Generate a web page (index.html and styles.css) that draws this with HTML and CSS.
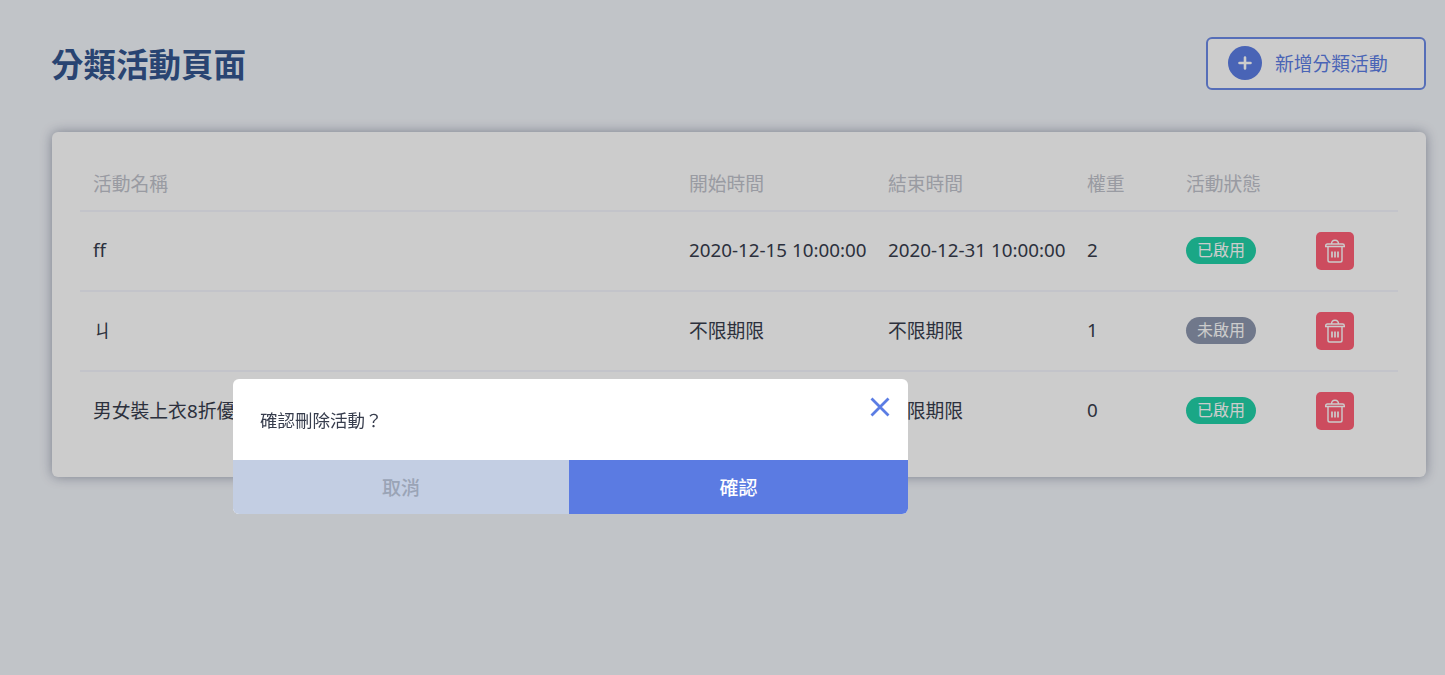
FILE: index.html
```html
<!DOCTYPE html>
<html lang="zh-Hant">
<head>
<meta charset="utf-8">
<title>分類活動頁面</title>
<link rel="stylesheet" href="styles.css">
</head>
<body>
<main class="page">
  <header class="page-head">
    <h1 class="page-title">分類活動頁面</h1>
    <button class="add-btn" type="button">
      <span class="add-icon"><svg width="14" height="14" viewBox="0 0 14 14"><path d="M7 1.500v11M1.500 7h11" stroke="#fff" stroke-width="2.600" stroke-linecap="round" fill="none"/></svg></span>
      <span>新增分類活動</span>
    </button>
  </header>
  <section class="card">
    <div class="row row-head">
      <div class="cell">活動名稱</div>
      <div class="cell">開始時間</div>
      <div class="cell">結束時間</div>
      <div class="cell">權重</div>
      <div class="cell">活動狀態</div>
      <div class="cell"></div>
    </div>
    <div class="row">
      <div class="cell">ff</div>
      <div class="cell">2020-12-15 10:00:00</div>
      <div class="cell">2020-12-31 10:00:00</div>
      <div class="cell">2</div>
      <div class="cell cell-ctl"><span class="badge badge-on">已啟用</span></div>
      <div class="cell cell-ctl"><button class="del-btn" type="button"><svg class="trash" viewBox="0 0 20 24"><path d="M.7 7.500h18.600v-.8q0-1.700-1.700-1.700H2.400q-1.700 0-1.700 1.700zM6.500 5q0-3.800 3.500-3.800T13.500 5M3 7.500v13.700q0 1.800 1.800 1.800h10.400q1.800 0 1.800-1.800V7.500"/><path class="trash-bars" d="M7 12.500v6M10 12.500v6M13 12.500v6"/></svg></button></div>
    </div>
    <div class="row">
      <div class="cell">ㄐ</div>
      <div class="cell">不限期限</div>
      <div class="cell">不限期限</div>
      <div class="cell">1</div>
      <div class="cell cell-ctl"><span class="badge badge-off">未啟用</span></div>
      <div class="cell cell-ctl"><button class="del-btn" type="button"><svg class="trash" viewBox="0 0 20 24"><path d="M.7 7.500h18.600v-.8q0-1.700-1.700-1.700H2.400q-1.700 0-1.700 1.700zM6.500 5q0-3.800 3.500-3.800T13.500 5M3 7.500v13.700q0 1.800 1.800 1.800h10.400q1.800 0 1.800-1.800V7.500"/><path class="trash-bars" d="M7 12.500v6M10 12.500v6M13 12.500v6"/></svg></button></div>
    </div>
    <div class="row row-last">
      <div class="cell">男女裝上衣8折優惠</div>
      <div class="cell">不限期限</div>
      <div class="cell">不限期限</div>
      <div class="cell">0</div>
      <div class="cell cell-ctl"><span class="badge badge-on">已啟用</span></div>
      <div class="cell cell-ctl"><button class="del-btn" type="button"><svg class="trash" viewBox="0 0 20 24"><path d="M.7 7.500h18.600v-.8q0-1.700-1.700-1.700H2.400q-1.700 0-1.700 1.700zM6.500 5q0-3.800 3.500-3.800T13.500 5M3 7.500v13.700q0 1.800 1.800 1.800h10.400q1.800 0 1.800-1.800V7.500"/><path class="trash-bars" d="M7 12.500v6M10 12.500v6M13 12.500v6"/></svg></button></div>
    </div>
  </section>
</main>
<div class="overlay"></div>
<div class="modal">
  <div class="modal-body">
    <p class="modal-text">確認刪除活動？</p>
    <button class="modal-close" type="button" aria-label="關閉"><svg width="20" height="20" viewBox="0 0 20 20"><path d="M1.500 1.500l17 17M18.500 1.500l-17 17" stroke="#5b7de4" stroke-width="2.800" fill="none"/></svg></button>
  </div>
  <div class="modal-actions">
    <button class="modal-btn modal-cancel" type="button">取消</button>
    <button class="modal-btn modal-ok" type="button">確認</button>
  </div>
</div>
</body>
</html>
```
FILE: styles.css
```css
* { box-sizing: border-box; }
html, body { margin: 0; height: 100%; overflow: hidden; }
body {
  background: #f2f5fa;
  font-family: "Noto Sans", "Noto Sans CJK TC", sans-serif;
  color: #373d4d;
}
button { font-family: inherit; cursor: pointer; }
.page { padding: 37px 19px 0 52px; }
.page-head {
  display: flex;
  justify-content: space-between;
  align-items: center;
  height: 53px;
  margin-bottom: 42px;
}
.page-title {
  margin: 2px 0 0 -1px;
  font-size: 32.500px;
  line-height: 44px;
  font-weight: 700;
  color: #34568f;
}
.add-btn {
  display: flex;
  align-items: center;
  gap: 13px;
  width: 220px;
  height: 53px;
  padding: 0 0 2px 20px;
  background: #fff;
  border: 2px solid #6c8ae6;
  border-radius: 6px;
  color: #5c7de4;
  font-size: 18.800px;
}
.add-icon {
  display: flex;
  align-items: center;
  justify-content: center;
  width: 34px;
  height: 34px;
  border-radius: 50%;
  background: #5c7de4;
}
.card {
  height: 345px;
  padding: 27px 28px 0;
  background: #fff;
  border-radius: 6px;
  box-shadow: 0 0 12px rgba(40, 50, 80, 0.42);
}
.row {
  display: grid;
  grid-template-columns: 596px 199px 199px 99px 130px 95px;
  align-items: center;
  height: 80px;
  padding-bottom: 1px;
  border-bottom: 2px solid #f4f6fd;
  font-size: 18.800px;
}
.row-head {
  height: 53px;
  padding-bottom: 2px;
  color: #c0c2cb;
}
.row-last { border-bottom-color: transparent; }
.cell { padding: 0 0 2px 13px; white-space: nowrap; }
.cell-ctl { padding-bottom: 0; }
.badge {
  display: block;
  width: 70px;
  height: 27px;
  border-radius: 14px;
  color: #fff;
  font-size: 16px;
  line-height: 26px;
  text-align: center;
}
.badge-on { background: #21d1a8; }
.badge-off { background: #8d97ae; }
.del-btn {
  display: flex;
  align-items: center;
  justify-content: center;
  width: 38px;
  height: 38px;
  padding: 0;
  border: 0;
  border-radius: 5px;
  background: #ff5f76;
}
.trash {
  width: 20px;
  height: 24px;
  fill: none;
  stroke: #fff;
  stroke-width: 1.400;
}
.trash-bars { stroke-width: 1.700; }
.overlay {
  position: fixed;
  inset: 0;
  background: rgba(0, 0, 0, 0.2);
}
.modal {
  position: fixed;
  left: 233px;
  top: 379px;
  width: 675px;
  height: 135px;
  display: flex;
  flex-direction: column;
  background: #fff;
  border-radius: 6px;
  overflow: hidden;
}
.modal-body {
  position: relative;
  height: 81px;
  padding: 28px 27px 0;
}
.modal-text {
  margin: 0;
  font-size: 17.500px;
  line-height: 26px;
  color: #373d4d;
}
.modal-close {
  position: absolute;
  top: 18px;
  right: 18px;
  display: flex;
  padding: 0;
  border: 0;
  background: none;
}
.modal-actions { display: flex; height: 54px; }
.modal-btn {
  border: 0;
  padding: 0;
  font-size: 19px;
  font-weight: 500;
}
.modal-cancel { width: 336px; background: #c3cee3; color: #9aa4b6; }
.modal-ok { flex: 1; background: #5b7be2; color: #fff; }
```
